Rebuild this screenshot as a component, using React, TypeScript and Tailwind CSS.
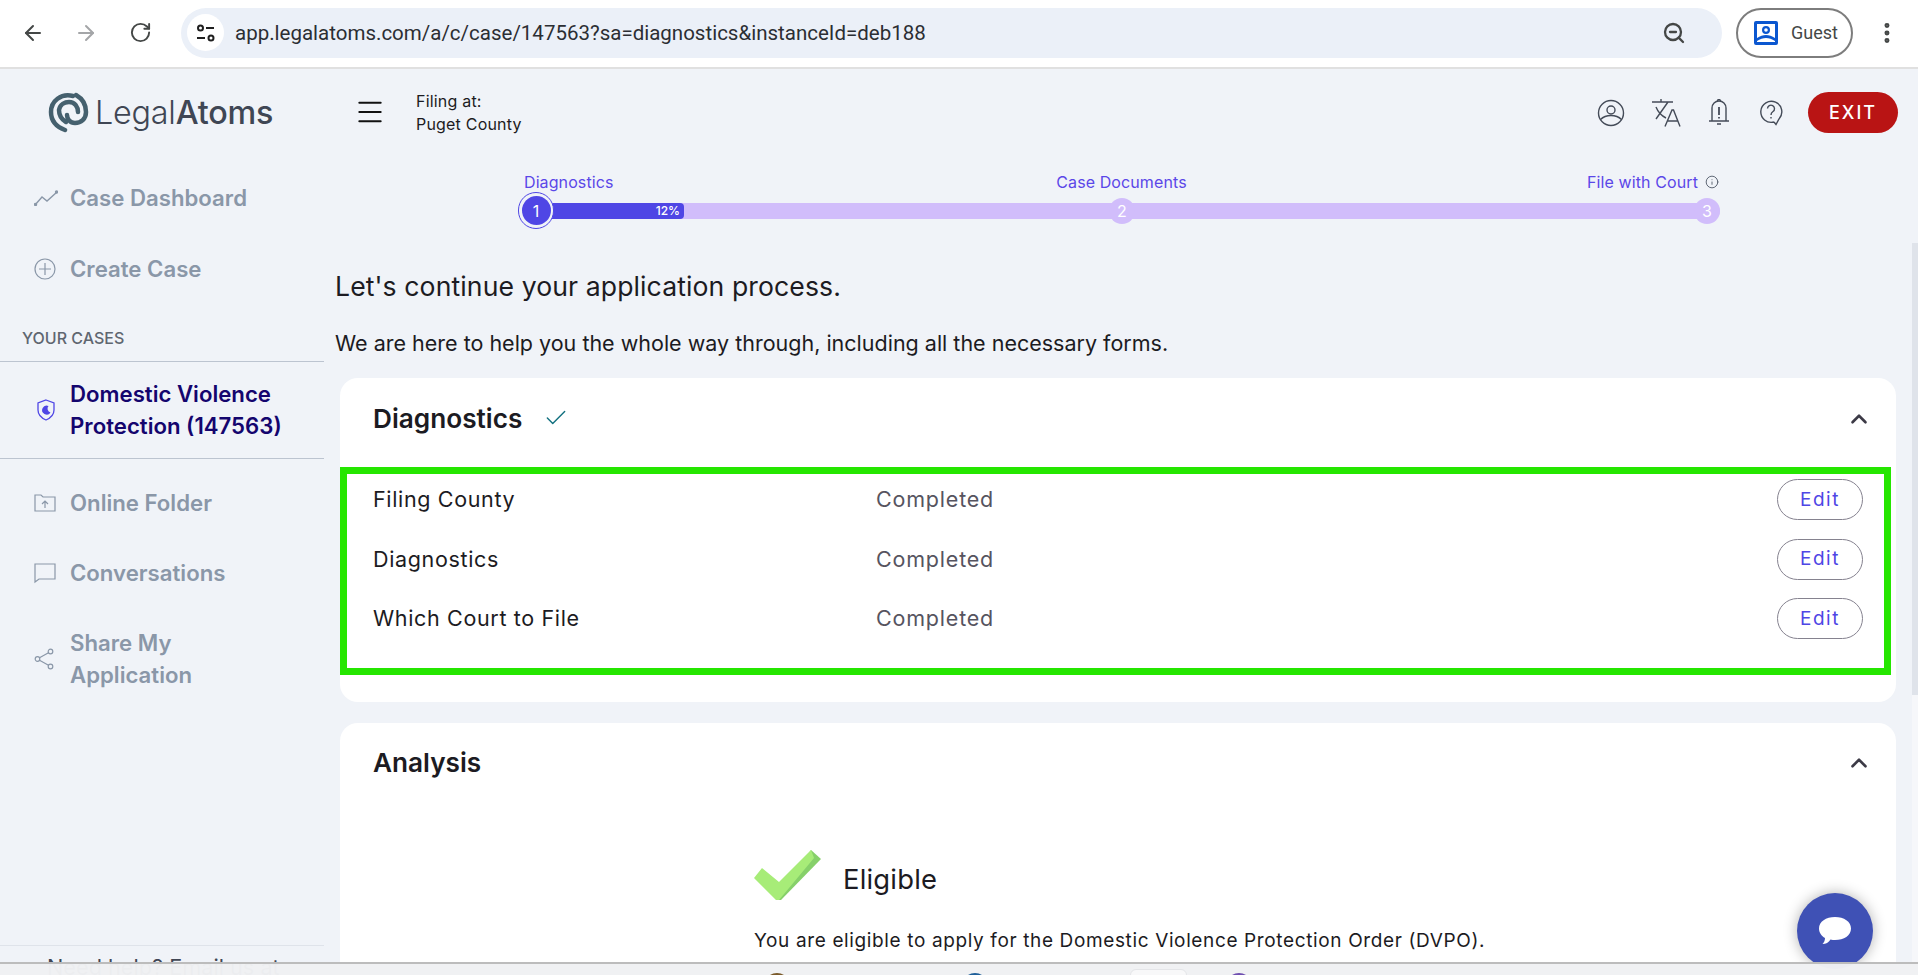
import { ArrowLeft, ArrowRight, RotateCw, ZoomOut, EllipsisVertical, Check, ChevronUp, Menu, Info } from 'lucide-react'

const navIcon = 'shrink-0 text-[#8a97a8]'

function Logo() {
  return (
    <svg width="42" height="42" viewBox="0 0 42 42" fill="none" stroke="#45606e" strokeWidth="4.5" strokeLinecap="round">
      <path d="M25 4C13 1 3 9 3 20c0 9 6 15 14 18" />
      <path d="M28 3c7 4 10 11 10 17 0 7-5 11-11 11-5 0-8-4-8-8" />
      <path d="M18 30c-5-3-7-7-7-12 1-6 6-8 10-8 6 0 9 5 9 10" />
    </svg>
  )
}

function SiteInfo() {
  return (
    <svg width="20" height="20" viewBox="0 0 20 20" fill="none" stroke="#1f1f1f" strokeWidth="2">
      <circle cx="4.500" cy="5" r="2.500" />
      <path d="M10 5h8M1 15h8" />
      <circle cx="15" cy="15" r="2.500" />
    </svg>
  )
}

function IconUser() {
  return (
    <svg width="28" height="28" viewBox="0 0 28 28" fill="none" stroke="#444b58" strokeWidth="1.4">
      <circle cx="14" cy="14" r="12.500" />
      <circle cx="14" cy="11" r="4" />
      <path d="M3.500 20.500c3-3 6.500-4 10.500-4s7.500 1 10.500 4" />
    </svg>
  )
}

function IconTranslate() {
  return (
    <svg width="30" height="28" viewBox="0 0 30 28" fill="none" stroke="#444b58" strokeWidth="1.4">
      <path d="M1 3h21M10 0v3M5 20L17 3M5 8c2 5 6 9 10 11" />
      <path d="M14 27.500L21 11h1.500l6.500 16.500M16.500 22h10" />
    </svg>
  )
}

function IconBell() {
  return (
    <svg width="22" height="28" viewBox="0 0 22 28" fill="none" stroke="#444b58" strokeWidth="1.4">
      <path d="M1 22h20M4 22V9a7 7 0 0 1 14 0v13" />
      <path d="M9.500 2a1.500 1.500 0 0 1 3 0M9 25h4" />
      <path d="M11 8v8M11 18v1.500" strokeWidth="1.800" />
    </svg>
  )
}

function IconHelp() {
  return (
    <svg width="24" height="28" viewBox="0 0 24 28" fill="none" stroke="#444b58" strokeWidth="1.4">
      <path d="M15 23A10.500 10.500 0 1 1 20 20L17 25.500 15 23" />
      <path d="M8.500 9.500a3.500 3.500 0 1 1 5.500 3c-1.500 1-2 1.500-2 3.500M12 18v1.500" />
    </svg>
  )
}

function Edit() {
  return (
    <button type="button" className="flex h-[41px] w-[86px] shrink-0 items-center justify-center rounded-full border border-[#85828f] pt-[1px] text-[19px] tracking-[1.5px] text-[#4f46e5]">
      Edit
    </button>
  )
}

function DiagRow({ name }: { name: string }) {
  return (
    <div className="flex h-[41px] items-center">
      <span className="w-[503px] text-[21.5px] tracking-[0.65px] text-[#1c1b22]">{name}</span>
      <span className="flex-1 text-[21.5px] tracking-[0.8px] text-[#56545f]">Completed</span>
      <Edit />
    </div>
  )
}

function NavItem({ icon, children }: { icon: React.ReactNode; children: React.ReactNode }) {
  return (
    <div className="flex items-center">
      <div className="flex w-[70px] shrink-0 pl-[34px]">{icon}</div>
      <span className="text-[22.2px] font-semibold leading-[32px] text-[#8a97a8]">{children}</span>
    </div>
  )
}

function StepDot({ n, left }: { n: number; left: string }) {
  return (
    <div className={`absolute top-[-5px] flex h-[26px] w-[26px] items-center justify-center rounded-full bg-[#d1bdfb] text-[16px] text-white ${left}`}>
      {n}
    </div>
  )
}

function Stepper() {
  return (
    <div className="ml-[184px] w-[1201px]">
      <div className="ml-[5px] grid h-[24px] w-[1195px] grid-cols-3 items-center text-[16px] tracking-[0.1px] text-[#5b47e8]">
        <span>Diagnostics</span>
        <span className="text-center">Case Documents</span>
        <span className="flex items-center justify-end gap-[7px]">
          File with Court <Info size={14} strokeWidth={1.5} className="text-[#4b5563]" />
        </span>
      </div>
      <div className="relative mt-[9px] ml-[10px] h-[16px] w-[1191px] rounded-full bg-[#d1bdfb]">
        <div className="flex h-full w-[155px] items-center justify-end rounded-[4px] bg-[#4f46e5] pr-[4px] text-[12px] font-medium text-white">12%</div>
        <div className="absolute left-[-11px] top-[-11px] flex h-[37px] w-[36px] items-center justify-center rounded-full border border-[#4f46e5] bg-[#f0f3f8]">
          <div className="flex h-[29px] w-[29px] items-center justify-center rounded-full bg-[#4f46e5] text-[16px] text-white">1</div>
        </div>
        <StepDot n={2} left="left-[580px]" />
        <StepDot n={3} left="left-[1165px]" />
      </div>
    </div>
  )
}

export default function App() {
  return (
    <div className="flex h-[975px] w-[1918px] flex-col overflow-hidden bg-[#f0f3f8] font-['Inter',sans-serif]">
      {/* browser toolbar */}
      <div className="flex h-[69px] shrink-0 items-center border-b-2 border-[#e0e0e0] bg-white pb-[2px]">
        <div className="flex w-[181px] items-center pl-[21px] text-[#444746]">
          <ArrowLeft size={24} strokeWidth={2} />
          <ArrowRight size={24} strokeWidth={2} className="ml-[29px] text-[#a4a6a8]" />
          <RotateCw size={23} strokeWidth={2} className="ml-[31px]" />
        </div>
        <div className="flex h-[50px] w-[1541px] items-center rounded-full bg-[#ebf0f8] pl-[6px] pr-[36px]">
          <div className="flex h-[37px] w-[37px] items-center justify-center rounded-full bg-white">
            <SiteInfo />
          </div>
          <span className="ml-[11px] flex-1 pt-[1px] font-['Roboto',sans-serif] text-[20.5px] text-[#2b2e33]">app.legalatoms.com/a/c/case/147563?sa=diagnostics&amp;instanceId=deb188</span>
          <ZoomOut size={24} strokeWidth={2.3} className="text-[#444746]" />
        </div>
        <div className="ml-[14px] flex h-[50px] w-[117px] items-center rounded-full border-2 border-[#7d7d7d] pl-[16px]">
          <svg width="24" height="24" viewBox="0 0 24 24" fill="#0b57d0">
            <path fillRule="evenodd" d="M2 0h20a2 2 0 0 1 2 2v20a2 2 0 0 1-2 2H2a2 2 0 0 1-2-2V2a2 2 0 0 1 2-2zm1 3v14c3-2 6-3 9-3s6 1 9 3V3zm9 2a4 4 0 1 1 0 8 4 4 0 0 1 0-8zm0 2.200a1.800 1.800 0 1 0 0 3.600 1.800 1.800 0 0 0 0-3.600zM3 21h18v-1c-3-2-6-3-9-3s-6 1-9 3z" />
          </svg>
          <span className="ml-[13px] font-['Roboto',sans-serif] text-[18px] text-[#444746]">Guest</span>
        </div>
        <EllipsisVertical size={26} strokeWidth={2.6} className="ml-[21px] text-[#444746]" />
      </div>

      {/* app area */}
      <div className="relative h-[906px] shrink-0 overflow-hidden">
        <header className="flex h-[88px] items-center">
          <div className="flex w-[354px] items-center pl-[48px]">
            <Logo />
            <span className="ml-[5px] text-[32.3px] font-light leading-none tracking-[-0.2px] text-[#3f4654]">
              Legal<span className="font-medium">Atoms</span>
            </span>
          </div>
          <Menu size={32} strokeWidth={1.5} className="-mt-[3px] text-[#111111]" />
          <div className="ml-[30px] text-[16px] leading-[23px] tracking-[0.2px] text-[#1c1b22]">
            <div>Filing at:</div>
            <div>Puget County</div>
          </div>
          <div className="-mt-[1px] ml-auto flex items-center pr-[20px]">
            <IconUser />
            <div className="ml-[26px]"><IconTranslate /></div>
            <div className="ml-[27px]"><IconBell /></div>
            <div className="ml-[29px]"><IconHelp /></div>
            <button type="button" className="ml-[25px] flex h-[41px] w-[90px] items-center justify-center rounded-full bg-[#b91414] text-[18px] font-medium tracking-[2px] text-white">
              EXIT
            </button>
          </div>
        </header>

        <div className="flex">
          {/* sidebar */}
          <aside className="flex h-[826px] w-[324px] shrink-0 flex-col pt-[25px]">
            <NavItem icon={<svg width="24" height="16" viewBox="0 0 24 16" fill="none" stroke="currentColor" strokeWidth="1.4" className={navIcon}><path d="M1 15l7-8 5 4 10-9" /><circle cx="1.500" cy="14.500" r="1" fill="currentColor" /><circle cx="22.500" cy="2" r="1" fill="currentColor" /></svg>}>Case Dashboard</NavItem>
            <div className="mt-[39px]">
              <NavItem icon={<svg width="22" height="22" viewBox="0 0 22 22" fill="none" stroke="currentColor" strokeWidth="1.2" className={navIcon}><circle cx="11" cy="11" r="10" /><path d="M11 5v12M5 11h12" /></svg>}>Create Case</NavItem>
            </div>
            <div className="mt-[41px] pl-[22px] text-[16px] font-medium leading-[24px] text-[#5f6670]">YOUR CASES</div>
            <div className="mt-[11px] border-y border-[#bcc4d0] py-[16px]">
              <div className="flex items-center">
                <div className="flex w-[70px] shrink-0 pl-[37px]">
                  <svg width="18" height="22" viewBox="0 0 18 22" fill="none" stroke="#4f46e5" strokeWidth="1.3">
                    <path d="M9 1l8 3v7c0 5-3.500 8-8 10-4.500-2-8-5-8-10V4z" />
                    <path d="M11.500 7a4.500 4.500 0 1 0 2 6.500 4 4 0 0 1-2-6.500z" fill="#4f46e5" stroke="none" />
                  </svg>
                </div>
                <span className="text-[22.2px] font-semibold leading-[32px] text-[#14056e]">
                  Domestic Violence<br />Protection (147563)
                </span>
              </div>
            </div>
            <div className="mt-[28px]">
              <NavItem icon={<svg width="22" height="18" viewBox="0 0 22 18" fill="none" stroke="currentColor" strokeWidth="1.200" className={navIcon}><path d="M1 17V1h6l2 2h12v14z" /><path d="M11 14V7M8 10l3-3 3 3" /></svg>}>Online Folder</NavItem>
            </div>
            <div className="mt-[38px]">
              <NavItem icon={<svg width="22" height="21" viewBox="0 0 22 21" fill="none" stroke="currentColor" strokeWidth="1.200" className={navIcon}><path d="M1 1h20v15H5l-4 3z" /></svg>}>Conversations</NavItem>
            </div>
            <div className="mt-[38px]">
              <NavItem icon={<svg width="20" height="22" viewBox="0 0 20 22" fill="none" stroke="currentColor" strokeWidth="1.200" className={navIcon}><circle cx="16.500" cy="3.500" r="2.300" /><circle cx="3.500" cy="11" r="2.300" /><circle cx="16.500" cy="18.500" r="2.300" /><path d="M5.500 9.800L14.500 4.700M5.500 12.200L14.500 17.300" /></svg>}>Share My<br />Application</NavItem>
            </div>
            <div className="mt-auto border-t border-[#dfe3ea] pl-[47px] pt-[5px] text-[21.700px] leading-[32px] text-[#3f4654]">Need help? Email us at</div>
          </aside>

          {/* content */}
          <main className="w-[1572px] pl-[11px] pt-[13px]">
            <Stepper />
            <h1 className="mt-[49px] text-[26.6px] font-normal leading-[36px] tracking-[0.1px] text-[#1c1b22]">Let's continue your application process.</h1>
            <p className="mt-[24px] text-[21.5px] leading-[30px] text-[#1c1b22]">We are here to help you the whole way through, including all the necessary forms.</p>
            <div className="ml-[5px] mt-[20px] h-[324px] w-[1556px] rounded-[18px] bg-white">
              <div className="flex h-[89px] items-center justify-between pb-[8px] pl-[33px] pr-[24px]">
                <div className="flex items-center">
                  <span className="text-[26.2px] font-semibold text-[#1c1b22]">Diagnostics</span>
                  <Check size={26} strokeWidth={1.3} className="ml-[21px] text-[#11707f]" />
                </div>
                <ChevronUp size={26} strokeWidth={2.4} className="text-[#3c3a46]" />
              </div>
              <div className="h-[208px] w-[1551px] border-[7px] border-[#25e600] pl-[26px] pr-[21px] pt-[5px]">
                <div className="flex flex-col gap-[18.5px]">
                  <DiagRow name="Filing County" />
                  <DiagRow name="Diagnostics" />
                  <DiagRow name="Which Court to File" />
                </div>
              </div>
            </div>
            <div className="ml-[5px] mt-[21px] h-[400px] w-[1556px] rounded-t-[18px] bg-white">
              <div className="flex h-[80px] items-center justify-between pl-[33px] pr-[24px]">
                <span className="text-[26.2px] font-semibold text-[#1c1b22]">Analysis</span>
                <ChevronUp size={26} strokeWidth={2.4} className="text-[#3c3a46]" />
              </div>
              <div className="pl-[414px] pt-[47px]">
                <div className="flex items-start">
                  <svg width="68" height="51" viewBox="0 0 68 51">
                    <path d="M57 0L67 9L27 50H23Z" fill="#86d06a" />
                    <path d="M0 28L8 18L25 32L57 0L60 8L25 50H22Z" fill="#a7ec78" />
                  </svg>
                  <span className="ml-[21px] mt-[9px] text-[27.4px] tracking-[0.2px] text-[#1c1b22]">Eligible</span>
                </div>
                <p className="mt-[25px] text-[19px] leading-[30px] tracking-[0.63px] text-[#1c1b22]">You are eligible to apply for the Domestic Violence Protection Order (DVPO).</p>
              </div>
            </div>
          </main>

          {/* page scrollbar */}
          <div className="ml-[16px] mt-[86px] w-[6px] bg-[#f6f7fa]">
            <div className="h-[452px] bg-[#dfe3ea]" />
          </div>
        </div>

        {/* chat bubble over the page */}
        <div className="absolute left-[1797px] top-[824px] flex h-[76px] w-[76px] items-center justify-center rounded-full bg-[#3f51b5] shadow-[0_0_14px_rgba(0,0,0,0.3)]">
          <svg width="34" height="32" viewBox="0 0 34 32" fill="white">
            <path d="M17 2c9 0 16 4.500 16 11.500S26 25 17 25c-1.500 0-3 0-4.500-.5C10.500 27.500 8 29 4.500 29c1.500-1.500 2.500-3.500 2.500-6C3.500 21 1 17.500 1 13.500 1 6.500 8 2 17 2z" />
          </svg>
        </div>
      </div>

      {/* windows taskbar peeking in, page shows faintly through it */}
      <div className="relative -mt-[13px] flex h-[13px] shrink-0 items-start overflow-hidden border-t-2 border-[#bcbcbc] bg-[#f0f1f3]/98 pl-[764px]">
        <div className="mt-[9px] h-[26px] w-[26px] shrink-0 rounded-full bg-[#7a5a2a]" />
        <div className="ml-[172px] mt-[9px] h-[26px] w-[26px] shrink-0 rounded-full bg-[#1f5f99]" />
        <div className="ml-[142px] mt-[5px] h-[26px] w-[57px] shrink-0 rounded-t-[6px] border border-[#e4e5e8] bg-[#f8f8f9]" />
        <div className="ml-[39px] mt-[9px] h-[26px] w-[26px] shrink-0 rounded-full bg-[#6f4fb0]" />
      </div>
    </div>
  )
}
